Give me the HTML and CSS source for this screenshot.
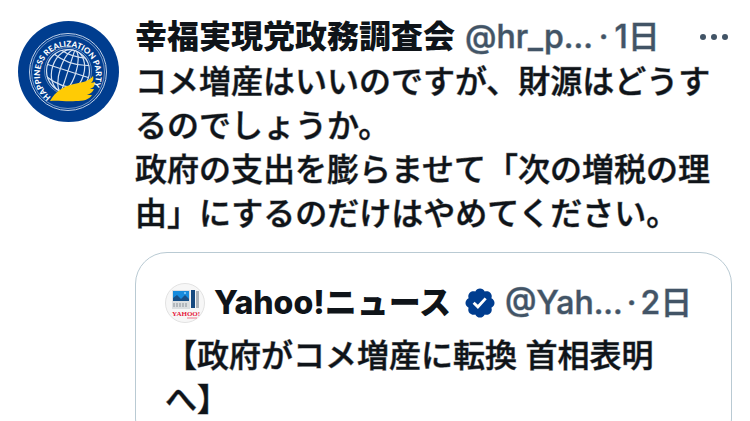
FILE: index.html
```html
<!DOCTYPE html>
<html lang="ja">
<head>
    <meta charset="UTF-8">
    <meta name="viewport" content="width=device-width, initial-scale=1.0">
    <title>幸福実現党政務調査会</title>
    <link rel="stylesheet" href="styles.css">
</head>
<body>
    <article class="post">
        <a class="avatar" href="#" aria-label="幸福実現党政務調査会">
            <svg viewBox="0 0 101 101">
                <defs>
                    <path id="ring" d="M33 76A28 28 0 1 1 75 66"/>
                    <clipPath id="globe"><circle cx="50" cy="50" r="22"/></clipPath>
                </defs>
                <circle cx="50.500" cy="50.500" r="50.500" fill="#003d8f"/>
                <g fill="none" stroke="#c3d2e8">
                    <circle cx="50" cy="51" r="38.500" stroke-width="1"/>
                    <circle cx="50" cy="51" r="36.500" stroke-width=".6"/>
                    <circle cx="50" cy="50" r="23.500" stroke-width=".5"/>
                </g>
                <g fill="none" stroke="#d5e1f0" stroke-width="1.200">
                    <circle cx="50" cy="50" r="21.500"/>
                    <g clip-path="url(#globe)" transform="rotate(18 50 50)">
                        <path d="M50 28v44M28 50h44M31 38q19 7 38 0M31 62q19 7 38 0M36 32q14 4 28 0"/>
                        <ellipse cx="50" cy="50" rx="8" ry="22"/>
                        <ellipse cx="50" cy="50" rx="16" ry="22"/>
                    </g>
                </g>
                <path d="M32 80C37 71 45 65 56 63C66 61 71 60 75 55C76 58 75 60 73 62L77 61C77 65 75 67 72 68L76 68C75 71 72 73 69 74L74 74C71 79 65 80 58 80C48 81 40 79 32 80Z" fill="#ffcb05"/>
                <text class="ring-text"><textPath href="#ring">HAPPINESS REALIZATION PARTY</textPath></text>
            </svg>
        </a>
        <div class="post-content">
            <header class="post-header">
                <a class="name" href="#">幸福実現党政務調査会</a>
                <a class="handle" href="#">@hr_p...</a>
                <span class="dot">·</span>
                <a class="time" href="#">1日</a>
                <button class="more" aria-label="もっと見る">
                    <svg viewBox="0 0 28 8"><circle cx="3" cy="4" r="3"/><circle cx="14" cy="4" r="3"/><circle cx="25" cy="4" r="3"/></svg>
                </button>
            </header>
            <p class="post-text">コメ増産はいいのですが、財源はどうするのでしょうか。<br>政府の支出を膨らませて「次の増税の理由」にするのだけはやめてください。</p>

            <section class="quote">
                <header class="post-header">
                    <a class="quote-avatar" href="#" aria-label="Yahoo!ニュース">
                        <svg viewBox="0 0 40 40">
                            <circle cx="20" cy="20" r="19.500" fill="#f7f7f7" stroke="#e2e2e2"/>
                            <path d="M7 7h18v19H7z" fill="#dcdfe1"/>
                            <path d="M8 8h16v10H8z" fill="#168bdd"/>
                            <path d="M8 18v-3l4-3 4 4 4-4 4 4v2z" fill="#174f86"/>
                            <circle cx="20" cy="10" r="1" fill="#8cd3ff"/>
                            <path d="M9 20v4M12 20v4M15 20v4M18 20v4M21 20v4" stroke="#8b9299"/>
                            <path d="M26 7h4v18h-4z" fill="#174a80"/>
                            <path d="M31 8h3v17h-3z" fill="#aeb4ba"/>
                            <text class="logo-text" x="7" y="33">YAHOO!</text>
                            <path d="M22 35h10" stroke="#f2798d"/>
                        </svg>
                    </a>
                    <a class="name" href="#">Yahoo!ニュース</a>
                    <svg class="verified" viewBox="0 0 22 22" role="img" aria-label="認証済みアカウント"><path d="M20.396 11c-.018-.646-.215-1.275-.57-1.816-.354-.54-.852-.972-1.438-1.246.223-.607.27-1.264.14-1.897-.131-.634-.437-1.218-.882-1.687-.47-.445-1.053-.75-1.687-.882-.633-.13-1.290-.083-1.897.14-.273-.587-.704-1.086-1.245-1.440S11.647 1.620 11 1.604c-.646.017-1.273.213-1.813.568s-.969.854-1.240 1.440c-.608-.223-1.267-.272-1.902-.14-.635.130-1.220.436-1.690.882-.445.470-.749 1.055-.878 1.688-.130.633-.080 1.290.144 1.896-.587.274-1.087.705-1.443 1.245-.356.540-.555 1.170-.574 1.817.020.647.218 1.276.574 1.817.356.540.856.972 1.443 1.245-.224.606-.274 1.263-.144 1.896.130.634.433 1.218.877 1.688.470.443 1.054.747 1.687.878.633.132 1.290.084 1.897-.136.274.586.705 1.084 1.246 1.439.540.354 1.170.551 1.816.569.647-.016 1.276-.213 1.817-.567s.972-.854 1.245-1.440c.604.239 1.266.296 1.903.164.636-.132 1.220-.447 1.680-.907.460-.460.776-1.044.908-1.681s.075-1.299-.165-1.903c.586-.274 1.084-.705 1.439-1.246.354-.540.551-1.170.569-1.816zM9.662 14.850l-3.429-3.428 1.293-1.302 2.072 2.072 4.400-4.794 1.347 1.246z"/></svg>
                    <a class="handle" href="#">@Yah...</a>
                    <span class="dot">·</span>
                    <a class="time" href="#">2日</a>
                </header>
                <p class="post-text">【政府がコメ増産に転換 首相表明へ】</p>
            </section>
        </div>
    </article>
</body>
</html>
```
FILE: styles.css
```css
html {
    overflow: hidden;
}

body {
    margin: 0;
    background-color: #fff;
    color: #0f1419;
    font-family: Inter, "Noto Sans CJK JP", sans-serif;
    font-size: 32px;
    font-weight: 500;
    line-height: 44px;
}

a {
    color: inherit;
    text-decoration: none;
}

.post {
    display: flex;
    gap: 16px;
    padding: 15px 18px 0;
}

.avatar {
    flex: none;
    width: 101px;
    height: 101px;
    margin-top: 6px;
}

.avatar svg,
.quote-avatar svg,
.more svg {
    display: block;
    width: 100%;
}

.ring-text {
    fill: #fff;
    font-family: Lato, sans-serif;
    font-size: 8px;
    font-weight: 900;
}

.post-content {
    flex: 1;
    min-width: 0;
}

.post-header {
    display: flex;
    align-items: center;
    white-space: nowrap;
}

.name {
    font-weight: 800;
}

.handle,
.dot,
.time {
    color: #425466;
    -webkit-text-stroke: 1px rgba(66, 84, 102, 0.5);
}

.handle {
    margin-left: 10px;
}

.dot {
    margin: 0 6px;
}

.more {
    width: 28px;
    margin-left: auto;
    margin-right: 4px;
    padding: 0;
    background: none;
    border: none;
    fill: #425466;
    cursor: pointer;
}

.post-text {
    margin: 1px 0 0;
    -webkit-text-stroke: 1px rgba(15, 20, 25, 0.5);
}

.quote {
    margin-top: 16px;
    padding: 28px 36px 28px 29px;
    border: 1px solid #b9cad3;
    border-radius: 32px;
}

.quote-avatar {
    flex: none;
    width: 40px;
    margin-right: 9px;
}

.logo-text {
    fill: #e6173c;
    font-family: "Liberation Serif", serif;
    font-size: 7px;
    font-weight: 700;
}

.verified {
    flex: none;
    width: 34px;
    margin-left: 12px;
    fill: #003d8f;
}

.quote .handle {
    margin-left: 8px;
}

.quote .dot {
    margin: 0 4px;
}

.quote .post-text {
    margin-top: 9px;
}
```
